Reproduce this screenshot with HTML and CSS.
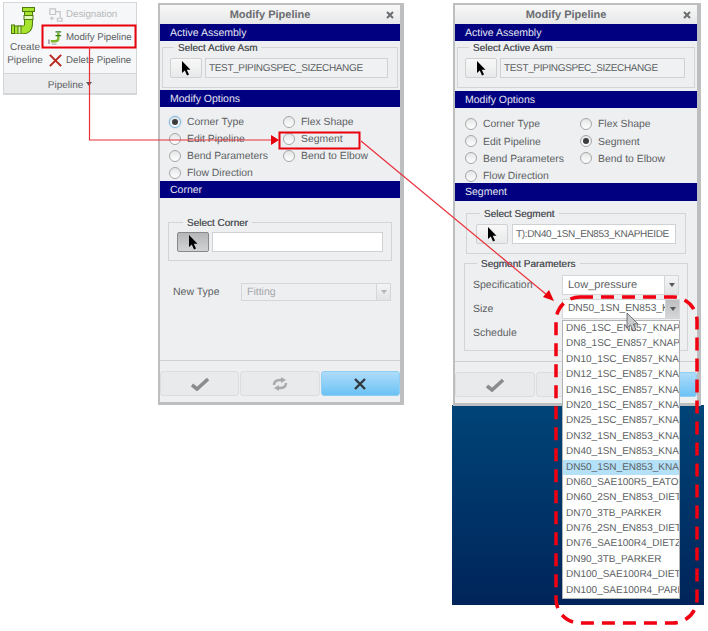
FILE: index.html
```html
<!DOCTYPE html>
<html lang="en">
  <head>
    <meta charset="UTF-8" />
    <title>Modify Pipeline</title>
    <link rel="stylesheet" href="styles.css">
  </head>

  <body>
    <div class="sheet">
      <!-- ribbon group -->
      <div class="ribbon">
        <div class="ribbon-main">
          <div class="ribbon-big">
            <svg class="icon-create" viewBox="0 0 25 27">
              <path d="M17.5 3V17Q17.5 23 11 23H3" fill="none" stroke="#4f7a10" stroke-width="9"/>
              <path d="M17.5 3V17Q17.5 23 11 23H3" fill="none" stroke="#a5e32c" stroke-width="7"/>
              <rect x="11.5" y="0.5" width="12" height="4" fill="#a5e32c" stroke="#4f7a10"/>
              <rect x="13" y="8.5" width="9" height="4" fill="#e4f8b8" stroke="#4f7a10"/>
              <rect x="0.5" y="18" width="3" height="8.5" fill="#a5e32c" stroke="#4f7a10"/>
              <rect x="7" y="19" width="3" height="8" fill="#d6f59a" stroke="#4f7a10"/>
            </svg>
            <span>Create<br>Pipeline</span>
          </div>
          <div class="ribbon-small">
            <div class="ribbon-item disabled">
              <svg class="icon-small" viewBox="0 0 16 16">
                <path d="M2 2H8V8H2ZM8 5H13V12M10 12H15V15H10ZM4 10V14M2 12H7" fill="none" stroke="#c4c6c8" stroke-width="1.3"/>
              </svg>
              <span>Designation</span>
            </div>
            <div class="ribbon-item">
              <svg class="icon-small" viewBox="0 0 16 16">
                <path d="M11 3V9Q11 12 7 12H3" fill="none" stroke="#7cb52a" stroke-width="2.5"/>
                <path d="M8 2H14M8 6H14" stroke="#2f7a20" stroke-width="1.4"/>
                <path d="M1 10V15" stroke="#a8aaac" stroke-width="2"/>
                <path d="M4 15H9" stroke="#b8babc" stroke-width="1.5"/>
              </svg>
              <span>Modify Pipeline</span>
            </div>
            <div class="ribbon-item">
              <svg class="icon-small" viewBox="0 0 16 16">
                <path d="M2 2L14 14M14 2L2 14" stroke="#bb2a22" stroke-width="2.2"/>
              </svg>
              <span>Delete Pipeline</span>
            </div>
          </div>
        </div>
        <div class="ribbon-title">Pipeline <i class="caret"></i></div>
      </div>

      <!-- dialog with corner options -->
      <div class="dialog dialog-corner">
        <div class="dialog-title">Modify Pipeline <svg class="close" viewBox="0 0 8 8"><path d="M1 1L7 7M7 1L1 7" stroke="#6a6c70" stroke-width="2"/></svg></div>
        <div class="band">Active Assembly</div>
        <fieldset class="group group-asm">
          <legend>Select Active Asm</legend>
          <div class="pick-row">
            <div class="pick-btn"><svg class="cursor" viewBox="0 0 10 15"><path d="M1 0V12L3.8 9.5L6 14.5L8 13.5L5.8 8.8H9.5Z"/></svg></div>
            <div class="pick-input">TEST_PIPINGSPEC_SIZECHANGE</div>
          </div>
        </fieldset>
        <div class="band">Modify Options</div>
        <div class="radios">
          <div class="radio-item"><i class="radio on focus"></i>Corner Type</div>
          <div class="radio-item"><i class="radio"></i>Flex Shape</div>
          <div class="radio-item"><i class="radio"></i>Edit Pipeline</div>
          <div class="radio-item"><i class="radio"></i>Segment</div>
          <div class="radio-item"><i class="radio"></i>Bend Parameters</div>
          <div class="radio-item"><i class="radio"></i>Bend to Elbow</div>
          <div class="radio-item"><i class="radio"></i>Flow Direction</div>
        </div>
        <div class="band">Corner</div>
        <div class="dialog-body">
          <fieldset class="group group-corner">
            <legend>Select Corner</legend>
            <div class="pick-row">
              <div class="pick-btn pressed"><svg class="cursor" viewBox="0 0 10 15"><path d="M1 0V12L3.8 9.5L6 14.5L8 13.5L5.8 8.8H9.5Z"/></svg></div>
              <div class="pick-input blank"></div>
            </div>
          </fieldset>
          <div class="type-row">
            <span class="type-label">New Type</span>
            <div class="combo disabled"><span class="combo-text">Fitting</span><span class="combo-arrow"><i class="caret"></i></span></div>
          </div>
        </div>
        <div class="dialog-foot">
          <div class="foot-btn"><svg class="icon-check" viewBox="0 0 18 14"><path d="M1 8L6 12L17 2" fill="none" stroke="#8a8c8e" stroke-width="3.6"/></svg></div>
          <div class="foot-btn foot-mid"><svg class="icon-cycle" viewBox="0 0 16 14"><path d="M2 8Q2 3 8 3H10M14 6Q14 11 8 11H6" fill="none" stroke="#a8aaac" stroke-width="2.4"/><path d="M9 0L14 3L9 6ZM7 8L2 11L7 14Z" fill="#a8aaac"/></svg></div>
          <div class="foot-btn foot-cancel"><svg class="icon-cross" viewBox="0 0 12 12"><path d="M1 1L11 11M11 1L1 11" stroke="#33383c" stroke-width="2.4"/></svg></div>
        </div>
      </div>

      <!-- dialog with segment options -->
      <div class="dialog-back"></div>
      <div class="dialog dialog-segment">
        <div class="dialog-title">Modify Pipeline <svg class="close" viewBox="0 0 8 8"><path d="M1 1L7 7M7 1L1 7" stroke="#6a6c70" stroke-width="2"/></svg></div>
        <div class="band">Active Assembly</div>
        <fieldset class="group group-asm">
          <legend>Select Active Asm</legend>
          <div class="pick-row">
            <div class="pick-btn"><svg class="cursor" viewBox="0 0 10 15"><path d="M1 0V12L3.8 9.5L6 14.5L8 13.5L5.8 8.8H9.5Z"/></svg></div>
            <div class="pick-input">TEST_PIPINGSPEC_SIZECHANGE</div>
          </div>
        </fieldset>
        <div class="band">Modify Options</div>
        <div class="radios">
          <div class="radio-item"><i class="radio"></i>Corner Type</div>
          <div class="radio-item"><i class="radio"></i>Flex Shape</div>
          <div class="radio-item"><i class="radio"></i>Edit Pipeline</div>
          <div class="radio-item"><i class="radio on"></i>Segment</div>
          <div class="radio-item"><i class="radio"></i>Bend Parameters</div>
          <div class="radio-item"><i class="radio"></i>Bend to Elbow</div>
          <div class="radio-item"><i class="radio"></i>Flow Direction</div>
        </div>
        <div class="band band-tall">Segment</div>
        <div class="dialog-body">
          <fieldset class="group group-seg">
            <legend>Select Segment</legend>
            <div class="pick-row">
              <div class="pick-btn"><svg class="cursor" viewBox="0 0 10 15"><path d="M1 0V12L3.8 9.5L6 14.5L8 13.5L5.8 8.8H9.5Z"/></svg></div>
              <div class="pick-input">T):DN40_1SN_EN853_KNAPHEIDE</div>
            </div>
          </fieldset>
          <fieldset class="group group-params">
            <legend>Segment Parameters</legend>
            <div class="param-row">
              <span class="param-label">Specification</span>
              <div class="combo"><span class="combo-text">Low_pressure</span><span class="combo-arrow"><i class="caret"></i></span></div>
            </div>
            <div class="param-row">
              <span class="param-label">Size</span>
              <div class="combo combo-size"><span class="combo-text">DN50_1SN_EN853_KNAPHEIDE</span><span class="combo-arrow pressed"><i class="caret"></i></span></div>
            </div>
            <div class="param-row">
              <span class="param-label">Schedule</span>
            </div>
          </fieldset>
        </div>
        <div class="dialog-foot">
          <div class="foot-btn"><svg class="icon-check" viewBox="0 0 18 14"><path d="M1 8L6 12L17 2" fill="none" stroke="#8a8c8e" stroke-width="3.6"/></svg></div>
          <div class="foot-btn foot-mid"></div>
          <div class="foot-btn foot-cancel"></div>
        </div>
      </div>

      <!-- open size list -->
      <ul class="size-list">
        <li>DN6_1SC_EN857_KNAPHEIDE</li>
        <li>DN8_1SC_EN857_KNAPHEIDE</li>
        <li>DN10_1SC_EN857_KNAPHEIDE</li>
        <li>DN12_1SC_EN857_KNAPHEIDE</li>
        <li>DN16_1SC_EN857_KNAPHEIDE</li>
        <li>DN20_1SC_EN857_KNAPHEIDE</li>
        <li>DN25_1SC_EN857_KNAPHEIDE</li>
        <li>DN32_1SN_EN853_KNAPHEIDE</li>
        <li>DN40_1SN_EN853_KNAPHEIDE</li>
        <li class="selected">DN50_1SN_EN853_KNAPHEIDE</li>
        <li>DN60_SAE100R5_EATON</li>
        <li>DN60_2SN_EN853_DIETZ</li>
        <li>DN70_3TB_PARKER</li>
        <li>DN76_2SN_EN853_DIETZ</li>
        <li>DN76_SAE100R4_DIETZ</li>
        <li>DN90_3TB_PARKER</li>
        <li>DN100_SAE100R4_DIETZ</li>
        <li>DN100_SAE100R4_PARKER</li>
      </ul>

      <!-- red callouts drawn over everything -->
      <svg class="callouts" viewBox="0 0 708 631">
        <rect x="42.5" y="25.5" width="93" height="22" fill="none" stroke="#e8000c" stroke-width="2"/>
        <rect x="279.5" y="132.5" width="80" height="16" fill="none" stroke="#e8000c" stroke-width="2"/>
        <path d="M89.5 47V140H272" fill="none" stroke="#e8303a" stroke-width="1.2"/>
        <path d="M271 135L279 140L271 145Z" fill="#e8000c"/>
        <path d="M361 141L547 295" fill="none" stroke="#e8303a" stroke-width="1.2"/>
        <path d="M554 301L543 297L549 290Z" fill="#e8000c"/>
        <rect x="556" y="297" width="141" height="326" rx="24" fill="none" stroke="#f00010" stroke-width="3.5" stroke-dasharray="13 8"/>
        <path d="M627 313V328L630.5 325L633 331L636 330L633.5 324H638Z" fill="#c8cacc" stroke="#55585c" stroke-width="0.8"/>
      </svg>
    </div>
  </body>
</html>
```

FILE: styles.css
```css
* {
  box-sizing: border-box;
}

body {
  margin: 0;
  background: #fff;
  font-family: "Liberation Sans", Arial, sans-serif;
  font-size: 10.5px;
  color: #5c5f63;
  text-rendering: geometricPrecision;
}

.sheet {
  position: relative;
  width: 708px;
  height: 631px;
  overflow: hidden;
}

/* ribbon */
.ribbon {
  position: absolute;
  left: 3px;
  top: 2px;
  width: 134px;
  height: 93px;
  display: flex;
  flex-direction: column;
  background: #f6f7f8;
  border: 1px solid #d4d6d8;
  border-bottom-width: 2px;
}

.ribbon-main {
  flex: 1;
  display: flex;
}

.ribbon-big {
  width: 42px;
  padding-top: 4px;
  display: flex;
  flex-direction: column;
  align-items: center;
  text-align: center;
  font-size: 10px;
  line-height: 12.5px;
  flex-shrink: 0;
}

.icon-create {
  width: 25px;
  height: 27px;
  margin-bottom: 8px;
  margin-left: -3px;
}

.ribbon-small {
  display: flex;
  flex-direction: column;
}

.ribbon-item {
  height: 23px;
  display: flex;
  align-items: center;
  gap: 3px;
  margin-left: 2px;
  font-size: 9.7px;
  white-space: nowrap;
}

.ribbon-item.disabled {
  color: #b5b7b9;
}

.icon-small {
  width: 15px;
  height: 15px;
  flex-shrink: 0;
}

.ribbon-title {
  height: 20px;
  background: #ebecee;
  border-top: 1px solid #d4d6d8;
  text-align: center;
  line-height: 23px;
  font-size: 10px;
}

.caret {
  display: inline-block;
  width: 0;
  height: 0;
  border-left: 3.5px solid transparent;
  border-right: 3.5px solid transparent;
  border-top: 4px solid #55585c;
  vertical-align: 2px;
}

/* dialogs */
.dialog {
  position: absolute;
  top: 3px;
  display: flex;
  flex-direction: column;
  height: 402px;
  background: #eeeff1;
  border-style: solid;
  border-color: #bcbec0;
  border-width: 2px 4px 3px 2px;
}

.dialog-corner {
  left: 158px;
  width: 246px;
}

.dialog-segment {
  left: 453px;
  width: 248px;
  height: 403px;
}

.dialog-back {
  position: absolute;
  left: 452px;
  top: 405px;
  width: 252px;
  height: 200px;
  background: linear-gradient(#004477, #00245a);
}

.dialog-title {
  position: relative;
  height: 19px;
  flex-shrink: 0;
  padding-right: 20px;
  background: linear-gradient(#f8f8f8, #e6e7e8);
  text-align: center;
  font-size: 11px;
  font-weight: bold;
  line-height: 21px;
  color: #6a6c70;
}

.close {
  position: absolute;
  right: 6px;
  top: 6px;
  width: 8px;
  height: 8px;
}

.band {
  height: 17px;
  flex-shrink: 0;
  padding-left: 10px;
  background: #000080;
  color: #e4e6f0;
  line-height: 19px;
}

.band-tall {
  height: 18px;
}

.group {
  margin: 0;
  padding: 0;
  border: 1px solid #d2d4d5;
  min-width: 0;
}

.group legend {
  margin-left: 4px;
  padding: 4px 4px 0;
  font-size: 10px;
  line-height: 12px;
  color: #55585c;
  text-shadow: 0 0 0.6px #55585c;
}

.group-asm {
  margin: -2px 2px 2px;
  padding: 3px 9px 9px 7px;
}

.dialog-segment .group-asm {
  margin-bottom: 3px;
}

.group-corner {
  margin: 16px 8px 0;
  padding: 2px 8px 8px;
}

.group-corner legend {
  margin-left: 6px;
}

.group-seg {
  margin: 4px 11px 0;
  padding: 3px 9px 9px;
}

.group-params {
  margin: 1px 9px 0;
  padding: 4px 8px 0;
  height: 96px;
}

.pick-row {
  display: flex;
  gap: 3px;
}

.group-seg .pick-row {
  gap: 4px;
}

.pick-btn {
  width: 32px;
  height: 20px;
  flex-shrink: 0;
  display: flex;
  align-items: center;
  justify-content: center;
  background: linear-gradient(#f8f8f8, #e8e9ea);
  border: 1px solid #cfd1d2;
  border-radius: 2px;
}

.pick-btn.pressed {
  background: linear-gradient(#b4b6b8, #d0d2d3);
  border-color: #87898b;
}

.cursor {
  width: 10px;
  height: 15px;
  fill: #000;
}

.pick-input {
  flex: 1;
  min-width: 0;
  height: 20px;
  padding-left: 3px;
  background: #f0f1f2;
  border: 1px solid #cfd1d2;
  line-height: 20px;
  font-size: 10px;
  letter-spacing: -0.35px;
  white-space: nowrap;
  overflow: hidden;
}

.pick-input.blank {
  background: #fff;
}

.group-seg .pick-input {
  background: #fff;
}

.radios {
  display: grid;
  grid-template-columns: 114px 1fr;
  grid-auto-rows: 17px;
  height: 74px;
  padding: 7px 0 0 9px;
  flex-shrink: 0;
  font-size: 10.4px;
}

.dialog-segment .radios {
  grid-template-columns: 115px 1fr;
  grid-auto-rows: 17.4px;
  height: 75px;
  padding: 8px 0 0 10px;
}

.radio-item {
  display: flex;
  align-items: center;
  gap: 6px;
  white-space: nowrap;
}

.radio {
  width: 12px;
  height: 12px;
  margin-top: -2px;
  flex-shrink: 0;
  display: flex;
  align-items: center;
  justify-content: center;
  background: linear-gradient(#e4e5e6, #fff);
  border: 1px solid #a4a6a8;
  border-radius: 50%;
}

.radio.on::after {
  content: "";
  width: 6px;
  height: 6px;
  border-radius: 50%;
  background: #3a3c40;
}

.radio.focus {
  border-color: #7ab6dc;
  box-shadow: 0 0 2px #9fd0ee;
}

.dialog-body {
  flex: 1;
  min-height: 0;
}

.type-row {
  display: flex;
  align-items: center;
  margin: 22px 9px 0 13px;
}

.type-label {
  width: 68px;
}

.combo {
  width: 118px;
  height: 20px;
  display: flex;
  background: #fff;
  font-size: 11px;
}

.combo-size {
  font-size: 10.2px;
}

.combo-text {
  flex: 1;
  min-width: 0;
  padding-left: 5px;
  border: 1px solid #d4d6d7;
  line-height: 18px;
  white-space: nowrap;
  overflow: hidden;
}

.combo-arrow {
  width: 14px;
  display: flex;
  align-items: center;
  justify-content: center;
  background: linear-gradient(#f4f4f5, #e2e3e4);
  border: 1px solid #d4d6d7;
  border-left: 0;
}

.combo-arrow.pressed {
  background: linear-gradient(#bcbec0, #d4d6d7);
}

.combo.disabled {
  width: 150px;
  height: 18px;
  background: #eeeff1;
  color: #a4a6a8;
  font-size: 10.5px;
}

.combo.disabled .combo-text {
  line-height: 16px;
}

.combo.disabled .caret {
  border-top-color: #b4b6b8;
}

.param-row {
  display: flex;
  align-items: center;
  height: 20px;
  margin-bottom: 4px;
}

.param-label {
  width: 89px;
  flex-shrink: 0;
}

.dialog-foot {
  display: flex;
  gap: 1px;
  height: 42px;
  padding: 10px 0 6px;
  flex-shrink: 0;
  border-top: 1px solid #cdcfd0;
}

.foot-btn {
  flex: 1;
  display: flex;
  align-items: center;
  justify-content: center;
  background: #e9eaec;
  border: 1px solid #dcdddf;
  border-radius: 3px;
}

.foot-cancel {
  background: linear-gradient(#aedcfa, #6cc2f4);
  border-color: #8fcdf3;
}

.icon-check {
  width: 18px;
  height: 14px;
}

.icon-cycle {
  width: 16px;
  height: 14px;
}

.icon-cross {
  width: 12px;
  height: 12px;
}

/* open size list */
.size-list {
  position: absolute;
  left: 562px;
  top: 320px;
  width: 118px;
  height: 279px;
  margin: 0;
  padding: 0;
  list-style: none;
  overflow: hidden;
  background: #fff;
  border: 1px solid #b0b2b4;
  font-size: 10px;
}

.size-list li {
  height: 15.4px;
  padding-left: 3px;
  line-height: 16.6px;
  white-space: nowrap;
  overflow: hidden;
}

.size-list li.selected {
  background: #b4e0f8;
}

.callouts {
  position: absolute;
  left: 0;
  top: 0;
  width: 708px;
  height: 631px;
}
```
